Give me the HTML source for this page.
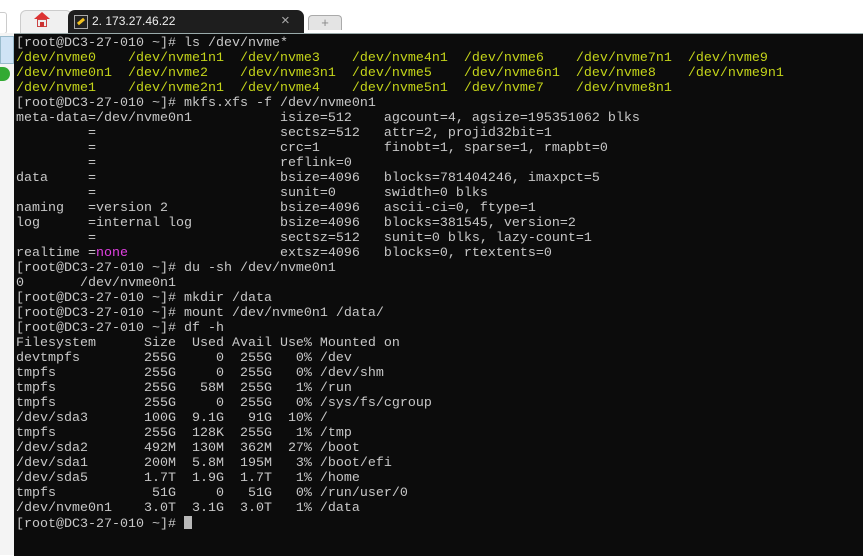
<!DOCTYPE html>
<html><head><meta charset="utf-8"><style>
html,body{margin:0;padding:0;width:863px;height:555px;overflow:hidden;background:#fff;font-family:"Liberation Sans",sans-serif}
#left{position:absolute;left:0;top:33px;width:14px;height:522px;background:#f4f4f4;border-right:1px solid #d8d8d8}
#term{position:absolute;left:14px;top:33px;width:849px;height:522px;background:#0c0c0c;border-top:1px solid #9aa}
pre{position:absolute;left:2px;top:2px;margin:0;font-family:"Liberation Mono",monospace;font-size:13.33px;line-height:15px;color:#c8c8c8;letter-spacing:0}
.y{color:#c4d41a}.m{color:#e040e0}
.cur{display:inline-block;width:8px;height:13px;background:#b8b8b8;vertical-align:-2px}
.tab{position:absolute;top:10px;height:23px}
</style></head><body>
<div style="position:absolute;left:0;top:0;width:863px;height:33px;background:#fff"></div>
<div style="position:absolute;left:0;top:12px;width:6px;height:20px;border:1px solid #ccc;border-left:none;border-radius:0 3px 3px 0"></div>
<div class="tab" style="left:20px;width:50px;background:#f0f0f0;border:1px solid #ccc;border-bottom:none;border-radius:6px 6px 0 0"></div>
<div style="position:absolute;left:34px;top:12px;width:16px;height:16px">
<div style="position:absolute;left:0;top:0;width:0;height:0;border-left:8px solid transparent;border-right:8px solid transparent;border-bottom:7px solid #d33"></div>
<div style="position:absolute;left:3px;top:7px;width:10px;height:8px;background:#eee;border:1px solid #c44;box-sizing:border-box"></div>
<div style="position:absolute;left:6px;top:10px;width:4px;height:5px;background:#c33"></div></div>
<div class="tab" style="left:68px;width:236px;background:#1e1e1e;border-radius:7px 7px 0 0"></div>
<div style="position:absolute;left:74px;top:15px;width:12px;height:12px;background:#222;border:1px solid #aaa"><div style="width:8px;height:3px;background:#f0c020;margin:4px 2px;transform:rotate(-40deg)"></div></div>
<div style="position:absolute;left:92px;top:14px;color:#eee;font-size:12px">2. 173.27.46.22</div>
<div style="position:absolute;left:281px;top:12px;color:#aaa;font-size:15px">×</div>
<div class="tab" style="left:308px;width:32px;top:15px;height:14px;background:#e4e4e4;border:1px solid #aaa;border-bottom:none;border-radius:4px 4px 0 0;text-align:center;font-size:13px;line-height:14px;color:#888">+</div>
<div id="left">
<div style="position:absolute;left:0;top:3px;width:12px;height:26px;background:#cfe3f5;border:1px solid #9bc"></div>
<div style="position:absolute;left:0;top:34px;width:10px;height:14px;background:#3a3;border-radius:0 7px 7px 0"></div>
</div>
<div id="term"><pre>[root@DC3-27-010 ~]# ls /dev/nvme*
<span class="y">/dev/nvme0    /dev/nvme1n1  /dev/nvme3    /dev/nvme4n1  /dev/nvme6    /dev/nvme7n1  /dev/nvme9</span>
<span class="y">/dev/nvme0n1  /dev/nvme2    /dev/nvme3n1  /dev/nvme5    /dev/nvme6n1  /dev/nvme8    /dev/nvme9n1</span>
<span class="y">/dev/nvme1    /dev/nvme2n1  /dev/nvme4    /dev/nvme5n1  /dev/nvme7    /dev/nvme8n1</span>
[root@DC3-27-010 ~]# mkfs.xfs -f /dev/nvme0n1
meta-data=/dev/nvme0n1           isize=512    agcount=4, agsize=195351062 blks
         =                       sectsz=512   attr=2, projid32bit=1
         =                       crc=1        finobt=1, sparse=1, rmapbt=0
         =                       reflink=0
data     =                       bsize=4096   blocks=781404246, imaxpct=5
         =                       sunit=0      swidth=0 blks
naming   =version 2              bsize=4096   ascii-ci=0, ftype=1
log      =internal log           bsize=4096   blocks=381545, version=2
         =                       sectsz=512   sunit=0 blks, lazy-count=1
realtime =<span class="m">none</span>                   extsz=4096   blocks=0, rtextents=0
[root@DC3-27-010 ~]# du -sh /dev/nvme0n1
0       /dev/nvme0n1
[root@DC3-27-010 ~]# mkdir /data
[root@DC3-27-010 ~]# mount /dev/nvme0n1 /data/
[root@DC3-27-010 ~]# df -h
Filesystem      Size  Used Avail Use% Mounted on
devtmpfs        255G     0  255G   0% /dev
tmpfs           255G     0  255G   0% /dev/shm
tmpfs           255G   58M  255G   1% /run
tmpfs           255G     0  255G   0% /sys/fs/cgroup
/dev/sda3       100G  9.1G   91G  10% /
tmpfs           255G  128K  255G   1% /tmp
/dev/sda2       492M  130M  362M  27% /boot
/dev/sda1       200M  5.8M  195M   3% /boot/efi
/dev/sda5       1.7T  1.9G  1.7T   1% /home
tmpfs            51G     0   51G   0% /run/user/0
/dev/nvme0n1    3.0T  3.1G  3.0T   1% /data
[root@DC3-27-010 ~]# <span class="cur"></span></pre></div>
</body></html>
